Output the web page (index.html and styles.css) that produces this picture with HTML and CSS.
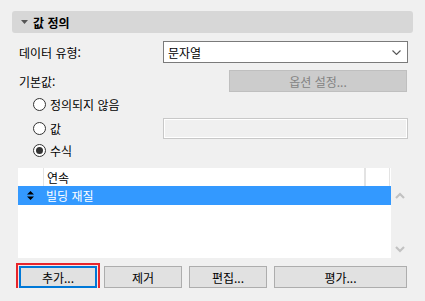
FILE: index.html
```html
<!DOCTYPE html>
<html lang="ko">
<head>
  <meta charset="UTF-8">
  <title>값 정의</title>
  <link rel="stylesheet" href="styles.css">
</head>
<body>
  <div class="panel">
    <div class="section-head">
      <svg class="caret" width="7" height="4" viewBox="0 0 7 4"><path d="M0 0H7L3.5 4Z" fill="#555"/></svg>
      <span>값 정의</span>
    </div>

    <div class="body">
      <div class="row first">
        <span class="label">데이터 유형:</span>
        <div class="select">
          <span>문자열</span>
          <svg width="9" height="5" viewBox="0 0 9 5"><path d="M0.5 0.5L4.5 4.5L8.5 0.5" fill="none" stroke="#555" stroke-width="1.1"/></svg>
        </div>
      </div>

      <div class="row second">
        <span class="label">기본값:</span>
        <div class="btn disabled options">옵션 설정...</div>
      </div>

      <div class="radio-row r1">
        <span class="radio"></span><span>정의되지 않음</span>
      </div>
      <div class="radio-row r2">
        <span class="radio"></span><span>값</span>
        <div class="field"></div>
      </div>
      <div class="radio-row r3">
        <span class="radio checked"></span><span>수식</span>
      </div>

      <div class="list">
        <div class="list-main">
          <div class="list-head">
            <span class="cell c1"></span>
            <span class="cell c2">연속</span>
            <span class="cell c3"></span>
          </div>
          <div class="list-item selected">
            <span class="cell c1">
              <svg width="7" height="9" viewBox="0 0 7 9"><path d="M0 3.5H7L3.5 0Z M0 5.5H7L3.5 9Z" fill="#000"/></svg>
            </span>
            <span class="cell c2">빌딩 재질</span>
          </div>
        </div>
        <div class="scrollbar">
          <svg width="10" height="7" viewBox="0 0 10 7"><path d="M1 6L5 2L9 6" fill="none" stroke="#c2c2c2" stroke-width="2.2"/></svg>
          <svg width="10" height="7" viewBox="0 0 10 7"><path d="M1 1L5 5L9 1" fill="none" stroke="#c2c2c2" stroke-width="2.2"/></svg>
        </div>
      </div>

      <div class="buttons">
        <div class="btn focused">추가...</div>
        <div class="btn">제거</div>
        <div class="btn">편집...</div>
        <div class="btn wide">평가...</div>
      </div>
    </div>
  </div>
</body>
</html>
```

FILE: styles.css
```css
* { margin: 0; padding: 0; box-sizing: border-box; }
body { background: #f0f0f0; color: #000; font-family: "Noto Sans CJK KR", "Noto Sans", sans-serif; font-size: 12px; }
.panel { padding: 11px 12px 0 12px; }
.section-head { height: 22px; background: #d7d7d7; border-radius: 3px; display: flex; align-items: center; padding-left: 9px; gap: 5px; font-weight: 700; }
.body { padding: 0 5px 0 7px; }
.row { display: flex; align-items: center; justify-content: space-between; height: 22px; }
.row.first { margin-top: 8px; }
.row.second { margin-top: 7px; }
.select { width: 245px; height: 22px; background: #fff; border: 1px solid #7a7a7a; display: flex; align-items: center; justify-content: space-between; padding: 0 6px 0 4px; }
.btn { height: 22px; background: #e1e1e1; border: 1px solid #adadad; display: flex; align-items: center; justify-content: center; }
.btn.disabled { background: #cccccc; border-color: #bfbfbf; color: #838383; }
.options { width: 178px; margin-right: 1px; }
.radio-row { display: flex; align-items: center; height: 22px; padding-left: 14px; gap: 4px; }
.r1 { margin-top: 1px; }
.r2 { margin-top: 2px; }
.radio { width: 13px; height: 13px; border: 1px solid #333; border-radius: 50%; background: #fff; display: flex; align-items: center; justify-content: center; }
.radio.checked::after { content: ""; width: 7px; height: 7px; border-radius: 50%; background: #333; }
.field { margin-left: auto; width: 245px; height: 21px; border: 1px solid #c8c8c8; box-shadow: inset 0 0 0 1px #fff; background: #f0f0f0; }
.list { display: flex; margin: 7px 0 0 -1px; height: 90px; }
.list-main { width: 373px; background: #fff; }
.list-head, .list-item { display: flex; align-items: center; }
.list-head { height: 18px; }
.list-item { height: 19px; }
.cell { height: 100%; display: flex; align-items: center; }
.c1 { width: 25px; justify-content: center; }
.c2 { width: 323px; padding-left: 3px; }
.c3 { width: 24px; }
.list-head .c2 { border-left: 1px solid #e3e3e3; border-right: 2px solid #e3e3e3; }
.list-head .c3 { border-right: 1px solid #e3e3e3; }
.list-item.selected { background: #3399ff; color: #fff; }
.scrollbar { width: 17px; display: flex; flex-direction: column; justify-content: space-between; align-items: center; padding: 24px 0 5px; }
.buttons { display: flex; gap: 7px; margin-top: 8px; }
.buttons .btn { width: 78px; }
.buttons .btn.wide { width: 133px; }
.btn.focused { border: 2px solid #0078d7; outline: 2px solid #e8262c; outline-offset: 1px; box-shadow: 0 0 0 1px #fbe4e4; }
```
